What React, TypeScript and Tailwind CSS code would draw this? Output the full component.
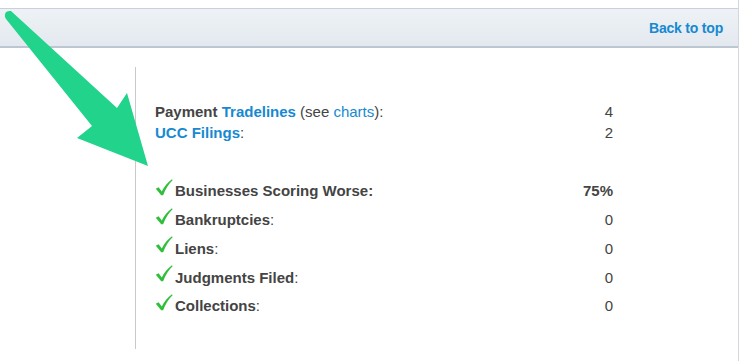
import React from 'react';

const Check = () => (
  <svg width="18" height="17" viewBox="0 0 18 17" className="shrink-0 relative -top-[4px]">
    <path d="M0.8 9.8 L3.6 8.2 L6.8 12.4 C9.4 7.4 12.8 3.2 17 0.3 L17.6 1.3 C13.6 4.8 10.6 9.8 8.1 16.3 L6.2 16.3 Z" fill="#2fbf3a" />
  </svg>
);

interface Row {
  label: string;
  value: string;
  boldValue?: boolean;
  boldColon?: boolean;
}

const rows: Row[] = [
  { label: 'Businesses Scoring Worse', value: '75%', boldValue: true, boldColon: true },
  { label: 'Bankruptcies', value: '0' },
  { label: 'Liens', value: '0' },
  { label: 'Judgments Filed', value: '0' },
  { label: 'Collections', value: '0' },
];

export default function App() {
  return (
    <div
      className="relative w-[750px] h-[361px] bg-white overflow-hidden text-[#444] text-[15px]"
      style={{ fontFamily: '"Liberation Sans", Arial, sans-serif' }}
    >
      <div className="w-[739px] h-full border-r border-[#d3d7db]">
        <div className="h-[8px]" />
        <div className="h-[40px] border-t border-[#c8d0d9] border-b-2 border-b-[#bcc7d1] bg-gradient-to-b from-[#eef2f6] to-[#e3e9ef] flex items-center justify-end pr-[15px] pt-[1px]">
          <a className="font-bold text-[#1689d1] text-[14px] tracking-[-0.2px]">Back to top</a>
        </div>
        <div className="flex pt-[19px]">
          <div className="w-[135px] shrink-0" />
          <div className="border-l border-[#c9c9c9] h-[282px] pl-[19px] pt-[35px] w-[478px]">
            <div className="flex justify-between h-[21px] items-center">
              <span>
                <b>Payment </b>
                <b className="text-[#1689d1]">Tradelines</b> (see <span className="text-[#1689d1]">charts</span>):
              </span>
              <span>4</span>
            </div>
            <div className="flex justify-between h-[21px] items-center">
              <span>
                <b className="text-[#1689d1]">UCC Filings</b>:
              </span>
              <span>2</span>
            </div>
            <div className="mt-[33px] flex flex-col">
              {rows.map((r) => (
                <div key={r.label} className="flex justify-between h-[28.8px] items-center">
                  <span className="flex items-center">
                    <Check />
                    <span className="ml-[2px]">
                      <b>{r.label}</b>
                      {r.boldColon ? <b>:</b> : ':'}
                    </span>
                  </span>
                  <span className={r.boldValue ? 'font-bold' : ''}>{r.value}</span>
                </div>
              ))}
            </div>
          </div>
        </div>
      </div>
      <svg className="absolute left-0 top-0" width="160" height="180" viewBox="0 0 160 180">
        <path
          d="M5 17 Q4 10 11 11 L117 108 L127 93 L148 166 L77 138 L92 126 L6 19 Z"
          fill="#22d38b"
        />
      </svg>
    </div>
  );
}
